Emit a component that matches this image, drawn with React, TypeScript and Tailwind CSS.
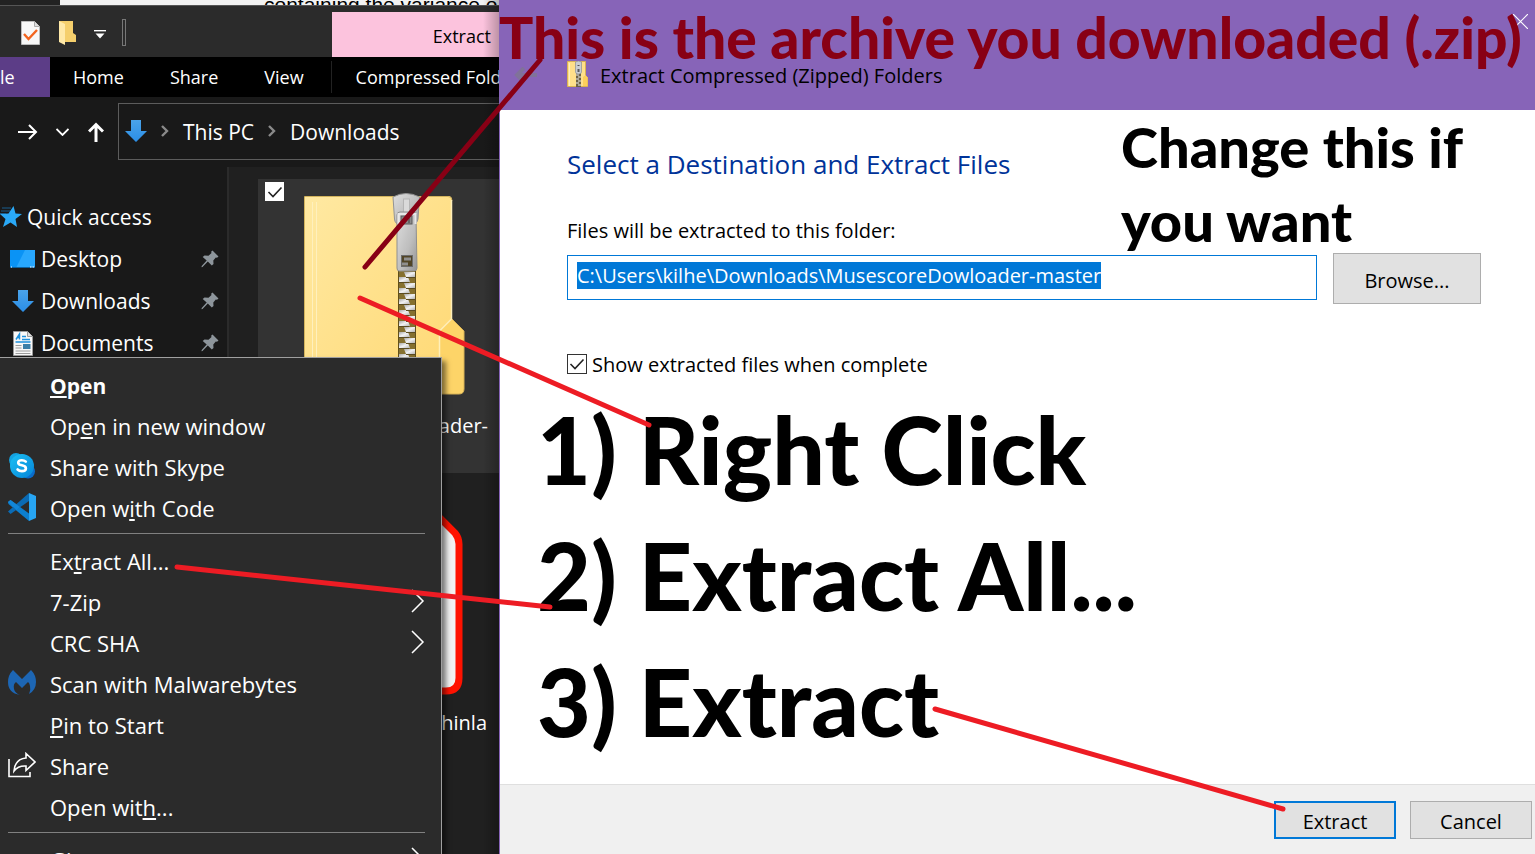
import { useEffect, useRef } from "react";
import type { ReactNode } from "react";

function DownArrow() {
  return (
    <svg width="22" height="24" viewBox="0 0 22 24" aria-hidden="true">
      <defs>
        <linearGradient id="arrowBlue" x1="0" y1="0" x2="0" y2="1">
          <stop offset="0" stopColor="#4aa3ea" />
          <stop offset="1" stopColor="#2b8ee6" />
        </linearGradient>
      </defs>
      <path d="M6 1h10v11h6L11 23 0 12h6z" fill="url(#arrowBlue)" />
    </svg>
  );
}

function StarIcon() {
  return (
    <svg width="22" height="22" viewBox="0 0 22 22" aria-hidden="true">
      <path d="M13.500 0l2 7.500 6.500.5-6.500 5 1.500 8-6.500-4.500L3 21l2.500-8L0 8l8.500-.5z" fill="#2aa9f7" />
      <path d="M2 2h9M1 5h9M0 7.500h6" stroke="#1b5f8f" strokeWidth="1" />
    </svg>
  );
}

function DesktopIcon() {
  return (
    <svg width="25" height="19" viewBox="0 0 25 19" aria-hidden="true">
      <rect width="25" height="18" fill="#0a93f5" />
      <path d="M15 0h10v18H6z" fill="#33adff" opacity=".75" />
      <path d="M0 17.500h25" stroke="#0b5f9d" />
      <path d="M1 17h1M20 17h1.500M22.500 17H24" stroke="#fff" />
    </svg>
  );
}

function DocumentIcon() {
  return (
    <svg width="20" height="25" viewBox="0 0 20 25" aria-hidden="true">
      <path d="M.5.5h14l5 5v19H.5z" fill="#f8f8f8" stroke="#9a9a9a" />
      <path d="M14.500.5v5h5" fill="#dcdcdc" stroke="#9a9a9a" />
      <path d="M3 8.500L6.500 3v5.500M4 6.500h3" stroke="#1e90dc" strokeWidth="1.500" fill="none" />
      <path d="M9 5.500h4M9 8.500h8M2.500 11h15" stroke="#1e90dc" strokeWidth="1.400" />
      <path d="M2.500 14.500h6M2.500 17h6M2.500 20h15M2.500 22.500h15" stroke="#9c9c9c" />
      <rect x="10" y="13" width="7.500" height="5" fill="#3c7fa8" />
    </svg>
  );
}

function PinIcon() {
  return (
    <svg width="18" height="18" viewBox="0 0 18 18" aria-hidden="true">
      <path
        d="M11.500.5l6 6-1.500 1.300-1.200-.3-2.500 3 .2 3.500-1.700 1.500-4-4L1.500 17 .5 17.200.7 16l5-5.500-4-3.500L3.500 5.500l4 .2 3-2.600-.4-1.300z"
        fill="#8d959b"
      />
    </svg>
  );
}

function ZipFolder() {
  const teeth = Array.from({ length: 11 }, (_, i) => 272 + i * 11);
  return (
    <svg width="166" height="206" viewBox="302 190 166 206" aria-hidden="true">
      <defs>
        <linearGradient id="folderFront" x1="0" y1="0" x2="1" y2="1">
          <stop offset="0" stopColor="#ffe9a2" />
          <stop offset="1" stopColor="#ffd873" />
        </linearGradient>
        <linearGradient id="steel" x1="0" y1="0" x2="1" y2="1">
          <stop offset="0" stopColor="#dedede" />
          <stop offset=".6" stopColor="#bdbdbd" />
          <stop offset="1" stopColor="#949494" />
        </linearGradient>
        <linearGradient id="tooth" x1="0" y1="0" x2="1" y2="1">
          <stop offset="0" stopColor="#a8a8a8" />
          <stop offset=".5" stopColor="#f2f2f2" />
          <stop offset="1" stopColor="#b5b5b5" />
        </linearGradient>
      </defs>
      <path d="M438 333l14-14 12 12v58q0 5-5 5h-21z" fill="#fdd468" stroke="#d8b356" />
      <path d="M305 196h143q4 0 4 4v119l-12 12v63H305z" fill="url(#folderFront)" />
      <path d="M304.500 394V196.500H448q4 0 4 4" fill="none" stroke="#d3b45d" />
      <path d="M451.500 200v119l-12 12v63" fill="none" stroke="#ffefba" strokeWidth="1.500" />
      <path d="M312.500 202v192M316.500 202v192" fill="none" stroke="#fff0bd" />
      <rect x="398" y="268" width="18" height="126" fill="#85702f" />
      <path d="M398.500 268v126M415.500 268v126" stroke="#5f4e1d" />
      {teeth.map((y) => (
        <g key={y}>
          <path d={`M404 ${y}h11v5h-9z`} fill="url(#tooth)" />
          <path d={`M399 ${y + 5}h9l2 5h-11z`} fill="url(#tooth)" />
          <path d={`M399 ${y + 10.5}h10M406 ${y + 5.5}h9`} stroke="#5b4c22" />
        </g>
      ))}
      <path d="M393 197q13-7 26.500 0L418 219q-1 5-5 5h-14q-4 0-4.500-5z" fill="url(#steel)" stroke="#949494" />
      <rect x="403.500" y="199" width="6" height="20" fill="#dadada" stroke="#b5b5b5" />
      <path d="M397 215q0-3 3-3h13q3 0 3 3l1 53q0 3-3 3h-15q-2 0-2-3z" fill="url(#steel)" stroke="#8f8f8f" />
      <path d="M398.500 224v-10h17v10" fill="none" stroke="#e8e8e8" strokeWidth="2" />
      <rect x="401" y="216" width="11" height="8" fill="#8a8a8a" stroke="#5a5a5a" />
      <path d="M403 219h6v4" fill="none" stroke="#666" strokeWidth="2" />
      <rect x="401.500" y="255.500" width="11" height="11" fill="#514526" stroke="#6c6c6c" />
      <path d="M404 259h7M402 264h6" stroke="#8f8f8f" strokeWidth="3" />
    </svg>
  );
}

function SmallZip() {
  return (
    <svg width="21" height="26" viewBox="0 0 21 26" aria-hidden="true">
      <path d="M.5.5h18v14l2 2v9H.5z" fill="#ffe08a" stroke="#d9b352" />
      <path d="M16 25v-9l2.500-2 2 2.500V25z" fill="#fccf5b" />
      <path d="M2.500 2v23" stroke="#fff0bd" />
      <rect x="9" y="11" width="5" height="15" fill="#6d6245" />
      <path d="M9 14h3M11 16h3M9 18h3M11 20h3M9 22h3M11 24h3" stroke="#eee" strokeWidth="1.200" />
      <path d="M8.500 1q3-2 6 0v10q0 2-3 2t-3-2z" fill="#c9cdd2" stroke="#8b8f94" strokeWidth=".7" />
      <rect x="10.500" y="8" width="2" height="3" fill="#5b5b5b" />
      <path d="M10.500 4.500h2" stroke="#555" />
    </svg>
  );
}

function SkypeIcon() {
  return (
    <svg width="28" height="28" viewBox="0 0 28 28" aria-hidden="true">
      <defs>
        <linearGradient id="skype" x1="0" y1="0" x2="1" y2="1">
          <stop offset="0" stopColor="#1bc0f4" />
          <stop offset="1" stopColor="#0685d8" />
        </linearGradient>
      </defs>
      <circle cx="8" cy="8" r="7" fill="#14a2e0" />
      <circle cx="20" cy="19.500" r="7" fill="#0a6ccb" />
      <circle cx="14" cy="14" r="12" fill="url(#skype)" />
      <path
        d="M17.800 9.700q-1.500-1.500-4-1.500-3.600 0-3.600 2.500 0 1.800 3.700 2.600 4 .8 4 3.100 0 2.700-4 2.700-2.800 0-4.300-1.600"
        fill="none"
        stroke="#fff"
        strokeWidth="2.600"
        strokeLinecap="round"
      />
    </svg>
  );
}

function CodeIcon() {
  return (
    <svg width="28" height="28" viewBox="0 0 28 28" aria-hidden="true">
      <path d="M0 9l2.500-2L21 20.500V28L.5 11z" fill="#0c7fcf" />
      <path d="M0 18.500L21 0v8L2.500 21z" fill="#0a6bb5" />
      <path d="M0 9l2.500-2L12 14l-3.500 3.200z" fill="#1286d8" />
      <path d="M21 0l7 3v22l-7 3z" fill="#27a5f3" />
    </svg>
  );
}

function MalwareIcon() {
  return (
    <svg width="28" height="26" viewBox="0 0 28 26" aria-hidden="true">
      <path
        d="M5 0l9 9 9-9q5 5 5 12 0 8-7 12 2-4 1-8-.5-3-2-4l-6 6-6-6q-3 2-2 7 1 4 6 6Q0 23 0 12 0 5 5 0z"
        fill="#1d66b4"
      />
    </svg>
  );
}

function ShareIcon() {
  return (
    <svg width="28" height="26" viewBox="0 0 28 26" aria-hidden="true" fill="none" stroke="#fff" strokeWidth="1.600">
      <path d="M1 7v17.500h21V20" />
      <path d="M18 1.500l9 8.500-9 8.500V14q-8-.5-12 5 1-12 12-13z" />
    </svg>
  );
}

function Chevron() {
  return (
    <svg width="14" height="24" viewBox="0 0 14 24" aria-hidden="true">
      <path d="M1 1l11 11L1 23" fill="none" stroke="#fff" strokeWidth="1.500" />
    </svg>
  );
}

function Crumb() {
  return (
    <svg width="8" height="12" viewBox="0 0 8 12" aria-hidden="true">
      <path d="M1 1l5 5-5 5" fill="none" stroke="#8a8a8a" strokeWidth="2.400" />
    </svg>
  );
}

function Tick() {
  return (
    <svg className="pointer-events-none absolute inset-0" width="20" height="20" viewBox="0 0 20 20" aria-hidden="true">
      <path d="M3.500 10l4.500 4.500 8.500-9" fill="none" stroke="#222" strokeWidth="1.600" />
    </svg>
  );
}

function NavRow({ icon, label }: { icon: ReactNode; label: string }) {
  return (
    <li className="flex h-[42px] items-center pr-2 pl-2">
      <a href="#" className="flex grow items-center gap-1">
        <span className="flex w-[29px] justify-center">{icon}</span>
        <span className="pt-0.5">{label}</span>
      </a>
      <PinIcon />
    </li>
  );
}

function MenuItem({ icon, more, children }: { icon?: ReactNode; more?: boolean; children: ReactNode }) {
  return (
    <button type="button" role="menuitem" className="flex h-[41px] w-full shrink-0 items-center pr-4 pl-2 text-left">
      <span className="flex w-[42px] shrink-0 pb-1.5">{icon}</span>
      <span className="grow pb-0.5 underline-offset-2">{children}</span>
      {more && (
        <span className="pb-1.5">
          <Chevron />
        </span>
      )}
    </button>
  );
}

function Divider() {
  return <div role="separator" className="mt-[3px] mr-4 mb-2 ml-2 h-px shrink-0 bg-[#808080]" />;
}

function ContextMenu() {
  return (
    <div
      role="menu"
      className="absolute top-[357px] bottom-0 left-0 flex w-[442px] flex-col overflow-hidden border-t border-r border-[#a0a0a0] bg-[#2b2b2b] pt-2 text-[22px] text-white shadow-[4px_4px_5px_rgba(0,0,0,0.5)]"
    >
      <MenuItem>
        <b className="text-[21px]">
          <u>O</u>pen
        </b>
      </MenuItem>
      <MenuItem>
        Op<u>e</u>n in new window
      </MenuItem>
      <MenuItem icon={<SkypeIcon />}>Share with Skype</MenuItem>
      <MenuItem icon={<CodeIcon />}>
        Open w<u>i</u>th Code
      </MenuItem>
      <Divider />
      <MenuItem>
        Ex<u>t</u>ract All...
      </MenuItem>
      <MenuItem more>7-Zip</MenuItem>
      <MenuItem more>CRC SHA</MenuItem>
      <MenuItem icon={<MalwareIcon />}>Scan with Malwarebytes</MenuItem>
      <MenuItem>
        <u>P</u>in to Start
      </MenuItem>
      <MenuItem icon={<ShareIcon />}>Share</MenuItem>
      <MenuItem>
        Open wit<u>h</u>...
      </MenuItem>
      <Divider />
      <MenuItem more>
        <u>G</u>ive access to
      </MenuItem>
    </div>
  );
}

function Explorer() {
  return (
    <section className="relative flex w-[499px] shrink-0 flex-col overflow-hidden bg-[#202020] text-white">
      <div className="flex h-[5px] shrink-0 overflow-hidden bg-[#222]">
        <div className="ml-[60px] flex grow items-end bg-[#f2f2f2] pl-[204px] font-['Liberation_Sans',sans-serif] text-[21px] leading-6 whitespace-nowrap text-black">
          <span className="-mb-3">containing the variance o</span>
        </div>
      </div>
      <header className="flex h-[52px] shrink-0 items-stretch border-t border-[#555] bg-[#2b2b2b]">
        <div className="flex w-[332px] shrink-0 items-center pt-0.5 pl-[21px]">
          <button type="button" aria-label="Properties" className="mr-[19px]">
            <svg width="19" height="24" viewBox="0 0 19 24" aria-hidden="true">
              <path d="M.5.5h13l5 5v18H.5z" fill="#f7f7f7" stroke="#bbb" />
              <path d="M13.500.5v5h5" fill="#ddd" stroke="#aaa" />
              <path d="M3 13l4.500 5L16 9" fill="none" stroke="#f2641e" strokeWidth="2.400" />
            </svg>
          </button>
          <button type="button" aria-label="New folder" className="mr-[18px]">
            <svg width="17" height="24" viewBox="0 0 17 24" aria-hidden="true">
              <path d="M0 0h14v12l3 2v7H3z" fill="#f5cf6c" />
              <path d="M0 0l6 3v21l-6-3z" fill="#ffe9a8" />
            </svg>
          </button>
          <button type="button" aria-label="Customize toolbar" className="mr-4 pt-1">
            <svg width="12" height="9" viewBox="0 0 12 9" aria-hidden="true">
              <path d="M0 .7h12" stroke="#fff" strokeWidth="1.400" />
              <path d="M1.500 3.500h9L6 8.500z" fill="#fff" />
            </svg>
          </button>
          <span className="h-[27px] w-1 border border-[#777]" />
        </div>
        <div className="mt-1.5 flex grow items-center justify-end bg-[#fcc3dd] pt-1 pr-2 text-[18px] text-black">Extract</div>
      </header>
      <nav className="flex h-10 shrink-0 items-center bg-black text-[18px] whitespace-nowrap">
        <button type="button" className="mr-[23px] flex h-10 w-[50px] shrink-0 items-center bg-[#5c3d87]">
          le
        </button>
        <button type="button" className="mr-[46px] shrink-0">Home</button>
        <button type="button" className="mr-[46px] shrink-0">Share</button>
        <button type="button" className="mr-[27px] shrink-0">View</button>
        <button type="button" className="h-8 shrink-0 border-l border-[#222] pl-6">Compressed Folder Tools</button>
      </nav>
      <div className="flex h-[70px] shrink-0 items-center bg-[#191919] text-[21px]">
        <div className="flex w-[118px] shrink-0 items-center pl-[18px]">
          <button type="button" aria-label="Forward" className="mr-[18px]">
            <svg width="20" height="16" viewBox="0 0 20 16" aria-hidden="true" fill="none" stroke="#fff" strokeWidth="2">
              <path d="M0 8h18M11 1l7 7-7 7" />
            </svg>
          </button>
          <button type="button" aria-label="Recent" className="mr-[19px]">
            <svg width="13" height="8" viewBox="0 0 13 8" aria-hidden="true" fill="none" stroke="#fff" strokeWidth="1.800">
              <path d="M.5 1l6 6 6-6" />
            </svg>
          </button>
          <button type="button" aria-label="Up">
            <svg width="16" height="20" viewBox="0 0 16 20" aria-hidden="true" fill="none" stroke="#fff" strokeWidth="3">
              <path d="M8 20V3M1 9.500l7-7 7 7" />
            </svg>
          </button>
        </div>
        <div className="mb-0.5 flex h-[57px] grow items-center gap-3.5 border border-r-0 border-[#5c5c5c] pl-1.5">
          <DownArrow />
          <Crumb />
          <a href="#" className="pt-1">This PC</a>
          <Crumb />
          <a href="#" className="pt-1">Downloads</a>
        </div>
      </div>
      <div className="flex grow">
        <aside className="w-[229px] shrink-0 border-r-2 border-[#2b2b2b] bg-[#191919] pt-[29px] text-[21px]">
          <ul>
            <li className="flex h-[42px] items-center">
              <a href="#" className="flex items-center gap-[5px]">
                <StarIcon />
                <span className="pt-0.5">Quick access</span>
              </a>
            </li>
            <NavRow icon={<DesktopIcon />} label="Desktop" />
            <NavRow icon={<DownArrow />} label="Downloads" />
            <NavRow icon={<DocumentIcon />} label="Documents" />
          </ul>
        </aside>
        <div className="grow pt-3 pl-[29px] text-right text-[20px]">
          <div className="relative h-[294px] bg-[#333] pt-[11px] pr-[11px] pl-11">
            <label className="absolute top-[3px] left-[7px] size-[19px]">
              <input type="checkbox" defaultChecked aria-label="Select item" className="block size-[19px] appearance-none bg-white" />
              <Tick />
            </label>
            <ZipFolder />
            <p className="mt-4 leading-7">ader-</p>
          </div>
          <div className="pt-[30px] pr-3">
            <svg width="162" height="196" viewBox="0 0 162 196" aria-hidden="true" className="ml-[44px]">
              <path d="M4 20Q4 4 20 4h107l26 26q4 5 4 11v134q0 13-13 13H20q-16 0-16-16z" fill="#f2f2f2" stroke="#ff1200" strokeWidth="7" />
            </svg>
            <p className="mt-2 leading-8">hinla</p>
          </div>
        </div>
      </div>
      <div className="pointer-events-none absolute inset-y-0 right-0 w-4 bg-linear-to-l from-black/25 to-transparent" />
      <ContextMenu />
    </section>
  );
}

function ExtractDialog() {
  const field = useRef<HTMLInputElement>(null);
  useEffect(() => {
    field.current?.focus();
    field.current?.select();
  }, []);
  return (
    <section className="relative flex min-w-0 grow flex-col border-l border-[#8764b8] bg-white text-[20px] text-black">
      <header className="relative flex h-[110px] shrink-0 items-end bg-[#8764b8] pb-5 pl-[14px]">
        <button type="button" aria-label="Back" className="mr-[30px] pb-[7px]">
          <svg width="23" height="16" viewBox="0 0 23 16" aria-hidden="true" fill="none" stroke="#80729a" strokeWidth="4">
            <path d="M23 8H4M10 1L3 8l7 7" />
          </svg>
        </button>
        <span className="pb-[3px]"><SmallZip /></span>
        <h1 className="ml-3 leading-7">Extract Compressed (Zipped) Folders</h1>
        <button type="button" aria-label="Close" className="absolute top-3.5 right-[7px]">
          <svg width="15" height="15" viewBox="0 0 15 15" aria-hidden="true">
            <path d="M0 0l15 15M15 0L0 15" stroke="#fff" strokeWidth="1.200" />
          </svg>
        </button>
      </header>
      <div className="flex grow flex-col pt-9 pr-[54px] pl-[67px]">
        <h2 className="text-[26px] leading-9 text-[#003399]">Select a Destination and Extract Files</h2>
        <label htmlFor="dest" className="mt-[35px] leading-7">
          Files will be extracted to this folder:
        </label>
        <div className="mt-2 flex items-start gap-4">
          <input
            id="dest"
            ref={field}
            type="text"
            defaultValue="C:\Users\kilhe\Downloads\MusescoreDowloader-master"
            className="mt-0.5 h-[45px] min-w-0 grow border border-[#0078d7] px-[9px] pb-1 leading-[30px] outline-none selection:bg-[#0078d7] selection:text-white"
          />
          <button type="button" className="h-[51px] w-[148px] border border-[#adadad] bg-[#e1e1e1] pt-1">
            Browse...
          </button>
        </div>
        <label className="mt-[45px] flex items-center gap-[5px] leading-7">
          <span className="relative size-5">
            <input type="checkbox" defaultChecked className="block size-5 appearance-none border border-[#333] bg-white" />
            <Tick />
          </span>
          <span className="pt-0.5">Show extracted files when complete</span>
        </label>
      </div>
      <footer className="flex h-[70px] shrink-0 items-start justify-end gap-3.5 border-t border-[#dfdfdf] bg-[#f0f0f0] pt-4 pr-[3px]">
        <button type="button" className="h-[38px] w-[122px] border-2 border-[#0078d7] bg-[#e1e1e1] pt-1">
          Extract
        </button>
        <button type="button" className="h-[38px] w-[122px] border border-[#adadad] bg-[#e1e1e1] pt-1">
          Cancel
        </button>
      </footer>
    </section>
  );
}

function Annotations() {
  return (
    <div className="pointer-events-none absolute inset-0 font-['Lato',sans-serif] font-black whitespace-nowrap text-black">
      <p className="absolute top-0.5 left-[499px] text-[57px] leading-[70px] text-[#880015]">
        This is the archive you downloaded (.zip)
      </p>
      <p className="absolute top-[110px] left-[1121px] text-[56px] leading-[74px]">
        Change this if
        <br />
        you want
      </p>
      <ol className="absolute top-[386px] left-[537px] text-[93px] leading-[126px]">
        <li>1) Right Click</li>
        <li>2) Extract All...</li>
        <li>3) Extract</li>
      </ol>
      <svg className="absolute inset-0 size-full" aria-hidden="true" fill="none" stroke="#ed1c24" strokeWidth="5" strokeLinecap="round">
        <path d="M540 60L365 267" stroke="#880015" />
        <path d="M360 298L649 425" />
        <path d="M177 567L550 607" />
        <path d="M935 709L1283 809" />
      </svg>
    </div>
  );
}

export default function App() {
  return (
    <main className="relative flex h-screen overflow-hidden font-['Open_Sans','Noto_Sans',sans-serif]">
      <Explorer />
      <ExtractDialog />
      <Annotations />
    </main>
  );
}
